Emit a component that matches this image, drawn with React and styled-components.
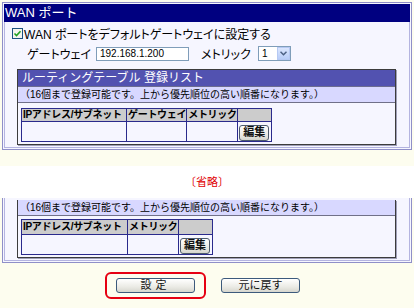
import React from 'react'
import styled, { createGlobalStyle } from 'styled-components'

const GlobalStyle = createGlobalStyle`
  html, body { margin: 0; padding: 0; background: #fdfdef; }
  body { font-family: "Liberation Sans", "Noto Sans CJK JP", sans-serif; color: #000; }
  * { box-sizing: border-box; }
`

const Page = styled.div`
  width: 414px;
  height: 308px;
  background: #fdfdef;
  display: flex;
  flex-direction: column;
  overflow: hidden;
`

const Frame = styled.div`
  margin: ${p => (p.cut ? '0 2px' : '2px 2px 0')};
  border: 1px solid #8f8fc8;
  border-top: ${p => (p.cut ? 'none' : '1px solid #8f8fc8')};
  padding: ${p => (p.cut ? '0 1px 1px' : '1px')};
  background: #f6f6ff;
`

const Title = styled.div`
  height: 18px;
  background: #000080;
  color: #fff;
  font-size: 13px;
  line-height: 18px;
  padding-left: 1px;
`

const Body = styled.div`
  border: 1px solid #b4b4e0;
  border-top: none;
  background: #f6f6ff;
  padding: ${p => (p.cut ? '2px 0 2px 12px' : '0 0 2px 0')};
  display: flex;
  flex-direction: column;
`

const CheckRow = styled.label`
  display: flex;
  align-items: center;
  gap: 1px;
  height: 15px;
  margin: 4px 0 0 7px;
  font-size: 12px;
  font-feature-settings: "palt";
`

const GatewayRow = styled.div`
  display: flex;
  align-items: center;
  height: 17px;
  margin: 4px 0 0 22px;
  font-size: 12px;
  font-feature-settings: "palt";
`

const Label = styled.span`
  width: ${p => p.w}px;
  flex: none;
`

const TextBox = styled.div`
  width: 93px;
  height: 14px;
  border: 1px solid #7f9db9;
  background: #fff;
  font-size: 10px;
  line-height: 12px;
  padding-left: 3px;
  margin-right: 12px;
`

const Select = styled.div`
  display: flex;
  width: 33px;
  height: 15px;
  border: 1px solid #7f9db9;
  background: #fff;
  font-size: 10px;
  line-height: 13px;
  margin-left: 7px;
`

const SelectValue = styled.span`
  flex: 1;
  padding-left: 3px;
`

const SelectArrow = styled.span`
  width: 13px;
  height: 13px;
  background: linear-gradient(#dbe6fe, #b8cdf8);
  border: 1px solid #b6c9f3;
  display: flex;
  align-items: center;
  justify-content: center;
`

const Routing = styled.div`
  width: 379px;
  margin: ${p => (p.cut ? '0' : '7px 0 0 12px')};
  border: 1px solid #3c3c3c;
  border-top: ${p => (p.cut ? 'none' : '1px solid #3c3c3c')};
  box-shadow: 1px 1px 0 #a0a0b8;
  background: #f6f6ff;
  padding-bottom: 2px;
`

const RoutingHead = styled.div`
  height: 17px;
  background: #5252b0;
  color: #fff;
  font-size: 12px;
  line-height: 17px;
  padding-left: 4px;
  border-bottom: 1px solid #6c6c90;
`

const Note = styled.div`
  height: 16px;
  background: #d8d8ff;
  border-bottom: 1px solid #707088;
  font-size: 10px;
  line-height: 15px;
  padding-left: 2px;
  white-space: nowrap;
`

const Grid = styled.table`
  border-collapse: collapse;
  table-layout: fixed;
  margin: ${p => p.top}px 0 0 3px;
  border: 1px solid #2a2a8c;
`

const HeadCell = styled.th`
  width: ${p => p.w}px;
  height: ${p => p.h}px;
  padding: 0 0 0 1px;
  border: 1px solid #2a2a8c;
  background: repeating-conic-gradient(#c2c2c2 0 25%, #d6d6d6 0 50%) 0 0 / 2px 2px;
  font-size: 10px;
  font-weight: bold;
  text-align: left;
  white-space: nowrap;
  overflow: hidden;
  letter-spacing: -0.3px;
  line-height: 12px;
`

const Cell = styled.td`
  height: 20px;
  padding: 0;
  border: 1px solid #2a2a8c;
  background: #f6f6ff;
  text-align: center;
  vertical-align: middle;
`

const EditButton = styled.button`
  width: 30px;
  height: 16px;
  padding: 0;
  border: 1px solid #4c5a6c;
  border-radius: 3px;
  background: linear-gradient(#ffffff, #e6e6e0 70%, #d4d4cc);
  font-family: inherit;
  font-size: 11px;
  font-weight: bold;
  line-height: 13px;
  color: #111;
`

const Cream = styled.div`
  height: 16px;
  flex: none;
`

const Omitted = styled.div`
  height: 32px;
  flex: none;
  background: #fff;
  color: #e00000;
  font-size: 11px;
  line-height: 32px;
  text-align: center;
`

const Actions = styled.div`
  display: flex;
  align-items: center;
  gap: 15px;
  margin-top: 9px;
  padding-left: 105px;
`

const Highlight = styled.div`
  width: 101px;
  height: 27px;
  border: 2px solid #e60012;
  border-radius: 6px;
  display: flex;
  align-items: center;
  justify-content: center;
`

const FormButton = styled.button`
  width: 79px;
  height: 15px;
  padding: 0;
  border: 1px solid #3c5a7c;
  border-radius: 3px;
  background: linear-gradient(#ffffff, #ebebe5 60%, #d6d6ce);
  font-family: inherit;
  font-size: 11px;
  line-height: 13px;
  color: #111;
  letter-spacing: ${p => (p.spaced ? '4px' : '0')};
`

function CheckIcon() {
  return (
    <svg width="11" height="11" viewBox="0 0 11 11">
      <rect x="0.5" y="0.5" width="10" height="10" fill="#f4f4ee" stroke="#1c5180" />
      <path d="M2.5 5.5 L4.5 7.5 L8.5 3.2" fill="none" stroke="#21a121" strokeWidth="1.6" />
    </svg>
  )
}

function Chevron() {
  return (
    <svg width="7" height="5" viewBox="0 0 7 5">
      <path d="M0.5 0.8 L3.5 3.8 L6.5 0.8" fill="none" stroke="#4d6185" strokeWidth="1.5" />
    </svg>
  )
}

function RouteGrid({ columns, top, headHeight }) {
  return (
    <Grid top={top}>
      <thead>
        <tr>
          {columns.map(c => (
            <HeadCell key={c.label} w={c.w} h={headHeight}>{c.label}</HeadCell>
          ))}
          <HeadCell w={34} h={headHeight} />
        </tr>
      </thead>
      <tbody>
        <tr>
          {columns.map(c => <Cell key={c.label} />)}
          <Cell><EditButton>編集</EditButton></Cell>
        </tr>
      </tbody>
    </Grid>
  )
}

const note = '（16個まで登録可能です。上から優先順位の高い順番になります。）'

export default function App() {
  return (
    <Page>
      <GlobalStyle />
      <Frame>
        <Title>WAN ポート</Title>
        <Body>
          <CheckRow><CheckIcon />WAN ポートをデフォルトゲートウェイに設定する</CheckRow>
          <GatewayRow>
            <Label w={69}>ゲートウェイ</Label>
            <TextBox>192.168.1.200</TextBox>
            <Label w={50}>メトリック</Label>
            <Select>
              <SelectValue>1</SelectValue>
              <SelectArrow><Chevron /></SelectArrow>
            </Select>
          </GatewayRow>
          <Routing>
            <RoutingHead>ルーティングテーブル 登録リスト</RoutingHead>
            <Note>{note}</Note>
            <RouteGrid
              top={5}
              headHeight={13}
              columns={[
                { label: 'IPアドレス/サブネット', w: 105 },
                { label: 'ゲートウェイ', w: 57 },
                { label: 'メトリック', w: 44 },
              ]}
            />
          </Routing>
        </Body>
      </Frame>
      <Cream />
      <Omitted>〔省略〕</Omitted>
      <Frame cut>
        <Body cut>
          <Routing cut>
            <Note>{note}</Note>
            <RouteGrid
              top={3}
              headHeight={15}
              columns={[
                { label: 'IPアドレス/サブネット', w: 106 },
                { label: 'メトリック', w: 43 },
              ]}
            />
          </Routing>
        </Body>
      </Frame>
      <Actions>
        <Highlight>
          <FormButton spaced>設定</FormButton>
        </Highlight>
        <FormButton>元に戻す</FormButton>
      </Actions>
    </Page>
  )
}
